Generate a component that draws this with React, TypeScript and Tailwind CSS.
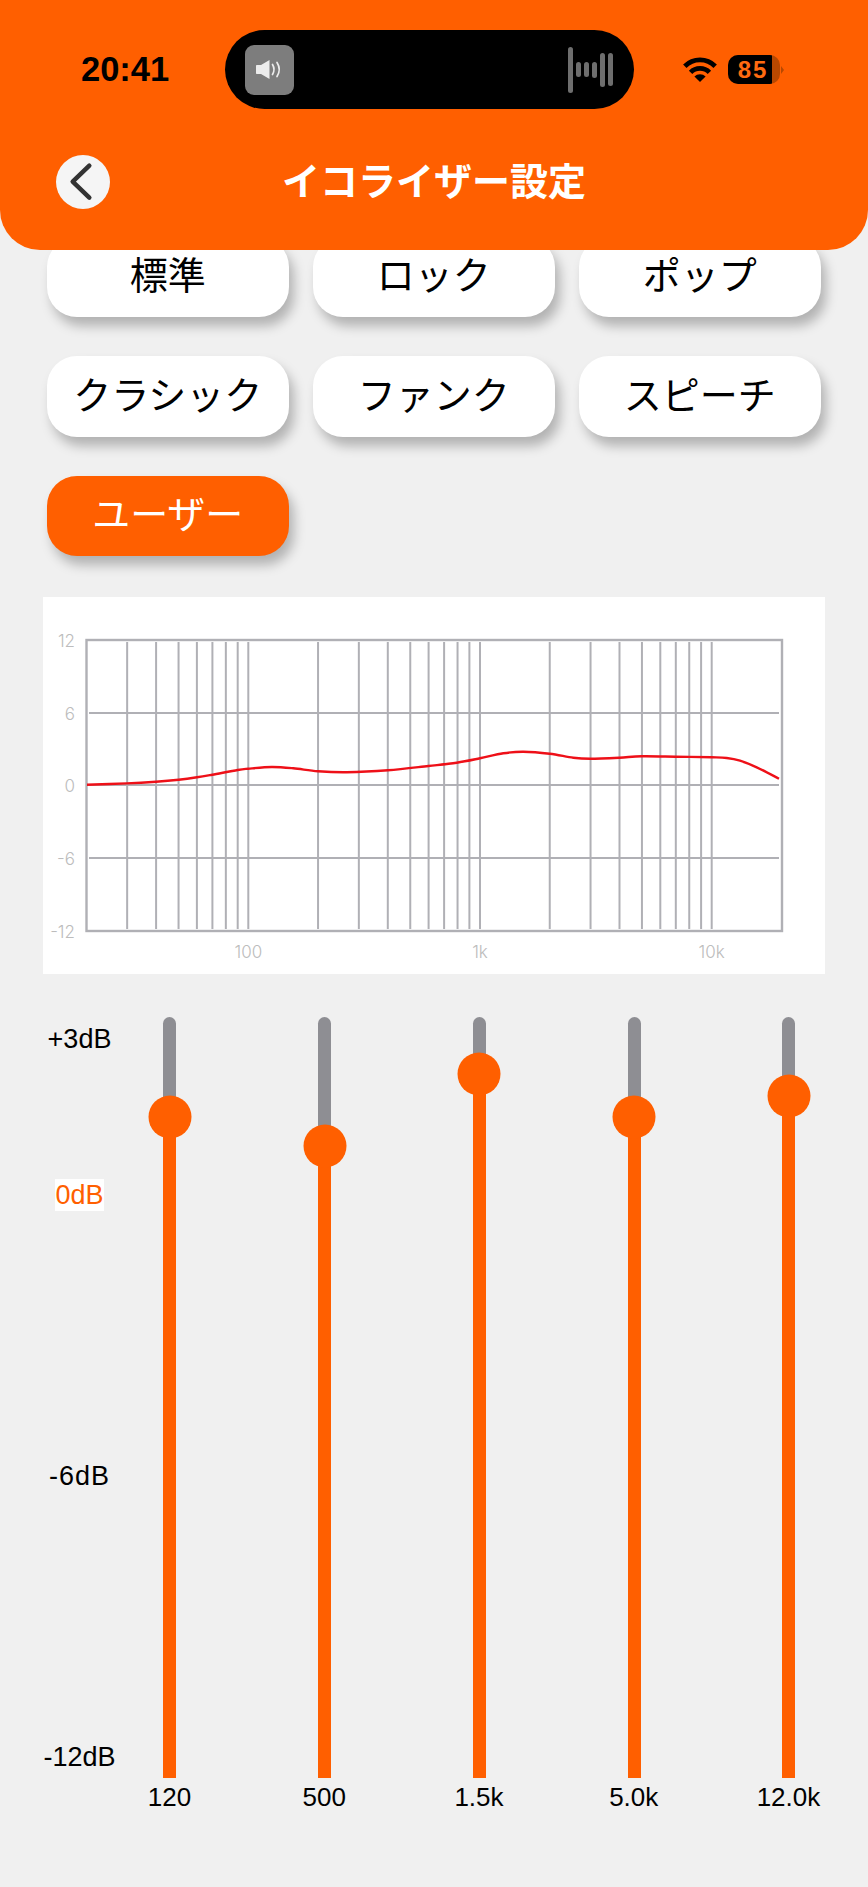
const SANS = "font-['Liberation_Sans','Noto_Sans_CJK_JP',sans-serif]";

const presets = [
  { label: "標準" },
  { label: "ロック" },
  { label: "ポップ" },
  { label: "クラシック" },
  { label: "ファンク" },
  { label: "スピーチ" },
  { label: "ユーザー", active: true },
];

const bands = [
  { label: "120", knob: 100 },
  { label: "500", knob: 129 },
  { label: "1.5k", knob: 57 },
  { label: "5.0k", knob: 100 },
  { label: "12.0k", knob: 78.5 },
];

const TRACK_H = 761;

const waveBars = ["h-[46px]", "h-[15px]", "h-[15px]", "h-[16px]", "h-[34px]", "h-[33px]"];

function Wifi() {
  return (
    <svg width="34" height="25" viewBox="0 0 34 25" className="block">
      <path d="M1.8 9.2A21.5 21.5 0 0 1 32.2 9.2" fill="none" stroke="#000" strokeWidth="4.8" />
      <path d="M7.6 15.4A13.2 13.2 0 0 1 26.4 15.4" fill="none" stroke="#000" strokeWidth="4.8" />
      <path d="M17 25L11.4 19.6A7.8 7.8 0 0 1 22.6 19.6Z" fill="#000" />
    </svg>
  );
}

function SpeakerIcon() {
  return (
    <svg width="49" height="50" viewBox="0 0 49 50" className="block">
      <path
        d="M12 20H16L24.5 15V34L16 29H12C11.4 29 11 28.6 11 28V21C11 20.4 11.4 20 12 20Z"
        fill="#ececec"
      />
      <path d="M27.5 19.5Q30.5 24.5 27.5 29.5" fill="none" stroke="#ececec" strokeWidth="1.7" strokeLinecap="round" />
      <path d="M32 17.5Q36.5 24.5 32 31.5" fill="none" stroke="#ececec" strokeWidth="1.7" strokeLinecap="round" />
    </svg>
  );
}

function Chart() {
  const decade = 231.7;
  const x100 = 248.3;
  const xOf = (f: number) => x100 + Math.log10(f / 100) * decade;
  const freqs = [
    30, 40, 50, 60, 70, 80, 90, 100, 200, 300, 400, 500, 600, 700, 800, 900, 1000, 2000, 3000, 4000, 5000, 6000, 7000,
    8000, 9000, 10000,
  ];
  const curve: [number, number][] = [
    [87, 784.7], [126.7, 783.4], [156, 781.7], [178.7, 779.7], [197, 777.3], [212.3, 774.7], [237.7, 770],
    [248.3, 768.7], [271.7, 767], [293.3, 768.3], [318, 771.3], [346.7, 772.3], [388, 770.3], [428.3, 766],
    [456.7, 762.7], [480, 758.3], [503.3, 753.3], [523.3, 751.7], [549.7, 753.7], [573.3, 757.7], [590.3, 758.7],
    [619.3, 757.7], [641.7, 756.3], [675.7, 756.7], [711.7, 757.3], [726.7, 758], [740, 760.7], [756.7, 767.3],
    [779, 778.7],
  ];
  let d = `M${curve[0][0]} ${curve[0][1]}`;
  for (let i = 0; i < curve.length - 1; i++) {
    const p0 = curve[Math.max(0, i - 1)];
    const p1 = curve[i];
    const p2 = curve[i + 1];
    const p3 = curve[Math.min(curve.length - 1, i + 2)];
    d += `C${p1[0] + (p2[0] - p0[0]) / 6} ${p1[1] + (p2[1] - p0[1]) / 6} ${p2[0] - (p3[0] - p1[0]) / 6} ${
      p2[1] - (p3[1] - p1[1]) / 6
    } ${p2[0]} ${p2[1]}`;
  }
  const grid = "#b0b0b5";
  const yLabels: [string, number][] = [["12", 640], ["6", 713], ["0", 785], ["-6", 858], ["-12", 931]];
  const xLabels: [string, number][] = [["100", 248.3], ["1k", 480], ["10k", 711.7]];
  return (
    <svg width="782" height="377" viewBox="43 597 782 377" className="block font-['Inter',sans-serif] font-light">
      <rect x="43" y="597" width="782" height="377" fill="#fff" />
      {freqs.map((f) => (
        <line key={f} x1={xOf(f)} x2={xOf(f)} y1="642" y2="929" stroke={grid} strokeWidth="2" />
      ))}
      {[713, 785, 858].map((y) => (
        <line key={y} x1="89" x2="779" y1={y} y2={y} stroke={grid} strokeWidth="2" />
      ))}
      <rect x="86.5" y="640" width="695.5" height="291" fill="none" stroke={grid} strokeWidth="2.4" />
      <path d={d} fill="none" stroke="#ee1018" strokeWidth="2.4" />
      {yLabels.map(([t, y]) => (
        <text key={t} x="75" y={y + 6.5} textAnchor="end" fontSize="17" fill="#bcbcbc">
          {t}
        </text>
      ))}
      {xLabels.map(([t, x]) => (
        <text key={t} x={x} y="957.5" textAnchor="middle" fontSize="17" fill="#bcbcbc">
          {t}
        </text>
      ))}
    </svg>
  );
}

export default function App() {
  return (
    <div className={`w-[868px] h-[1887px] overflow-hidden bg-[#f0f0f0] ${SANS}`}>
      <header className="relative z-10 h-[250px] rounded-b-[40px] bg-[#ff5f00]">
        <div className="flex items-center pt-[30px] pl-[81px]">
          <div className="w-[144px] text-[34.5px] leading-[79px] font-bold text-black">20:41</div>
          <div className="flex h-[79px] w-[409px] items-center justify-between rounded-full bg-black pl-[20px] pr-[21px]">
            <div className="h-[50px] w-[49px] rounded-[9px] bg-[#7d7d7d]">
              <SpeakerIcon />
            </div>
            <div className="flex items-center gap-[3px]">
              {waveBars.map((h, i) => (
                <div key={i} className={`w-[5px] rounded-full bg-[#6e6e6e] ${h}`} />
              ))}
            </div>
          </div>
          <div className="ml-[48.5px]">
            <Wifi />
          </div>
          <div className="ml-[11.5px] flex items-center">
            <div className="flex h-[29px] w-[52px] overflow-hidden rounded-[10px] bg-[#b84800]">
              <div className="flex h-full w-[44px] items-center justify-center bg-black pl-[6px] text-[24px] font-bold tracking-[2px] text-[#ff6a10]">
                85
              </div>
            </div>
            <div className="ml-[1px] h-0 w-0 border-y-[4px] border-l-[3px] border-y-transparent border-l-[#b84800]" />
          </div>
        </div>
        <div className="mt-[46px] grid grid-cols-[1fr_auto_1fr] items-center px-[56px]">
          <button className="flex h-[54px] w-[54px] items-center justify-center rounded-full bg-[#f5f5f5]">
            <svg width="54" height="54" viewBox="0 0 54 54" className="block">
              <path
                d="M33.3 10.7L16.7 26.7L33.3 42.7"
                fill="none"
                stroke="#333"
                strokeWidth="4.5"
                strokeLinecap="round"
                strokeLinejoin="round"
              />
            </svg>
          </button>
          <h1 className="text-[38px] leading-[54px] font-bold text-white">イコライザー設定</h1>
          <div />
        </div>
      </header>

      <section className="-mt-[13.5px] grid grid-cols-[241.5px_241.5px_241.5px] gap-x-[24.5px] gap-y-[39px] pl-[47px]">
        {presets.map((p) => (
          <button
            key={p.label}
            className={`h-[80.5px] rounded-[30px] text-[38px] shadow-[5px_9px_12px_rgba(0,0,0,0.26)] ${
              p.active ? "bg-[#ff5f00] text-white" : "bg-white text-black"
            }`}
          >
            {p.label}
          </button>
        ))}
      </section>

      <section className="mt-[41px] ml-[43px]">
        <Chart />
      </section>

      <section className="mt-[43px] flex">
        <div className="flex w-[92.6px] shrink-0 flex-col text-[27px] leading-[30px] text-black">
          <div className="mt-[7px] ml-[19.5px] w-[120px] text-center">+3dB</div>
          <div className="mt-[125px] ml-[19.5px] w-[120px] text-center">
            <span className="inline-block h-[32px] w-[49px] bg-white leading-[32px] text-[#ff5f00]">0dB</span>
          </div>
          <div className="mt-[250px] ml-[19.5px] w-[120px] text-center tracking-[1px]">-6dB</div>
          <div className="mt-[251px] ml-[19.5px] w-[120px] text-center">-12dB</div>
        </div>
        <div className="relative grid w-[773.75px] grid-cols-5">
          {bands.map((b) => (
            <div key={b.label} className="flex flex-col items-center">
              <div className="relative flex h-[761px] w-[13px] flex-col justify-end rounded-t-full bg-[#8e8e93]">
                <div className="w-full bg-[#ff5f00]" style={{ height: TRACK_H - b.knob }} />
                <div
                  className="absolute left-1/2 h-[43px] w-[43px] -translate-x-1/2 -translate-y-1/2 rounded-full bg-[#ff5f00]"
                  style={{ top: b.knob }}
                />
              </div>
              <div className="mt-[4px] whitespace-nowrap pr-[1px] text-[26px] leading-[30px] text-black">{b.label}</div>
            </div>
          ))}
        </div>
      </section>
    </div>
  );
}
